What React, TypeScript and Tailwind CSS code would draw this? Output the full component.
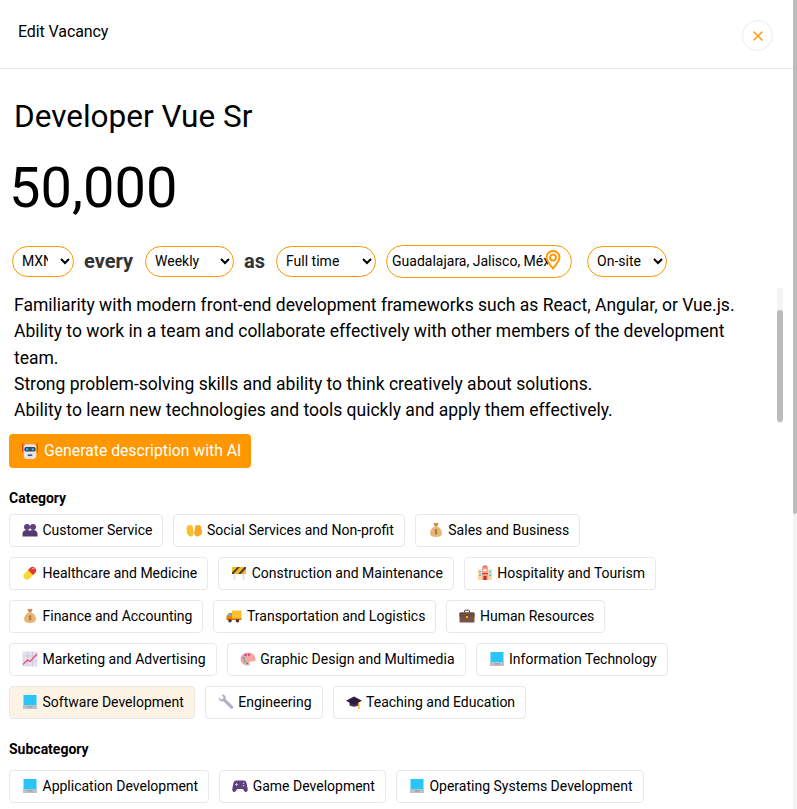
import type { ReactNode } from "react";
import { X } from "lucide-react";

const Svg = ({ children }: { children: ReactNode }) => (
  <svg viewBox="0 0 16 16" className="h-4 w-4 shrink-0">
    {children}
  </svg>
);

const People = () => (
  <Svg>
    <circle cx="5" cy="5" r="3" fill="#5e3f7f" />
    <circle cx="11" cy="5" r="3" fill="#5e3f7f" />
    <path d="M.5 14.500v-3C.5 9.500 2.500 8 5 8c1.300 0 2.300.3 3 .8.700-.5 1.700-.8 3-.8 2.500 0 4.500 1.500 4.500 3.500v3z" fill="#533a72" />
  </Svg>
);

const Hands = () => (
  <Svg>
    <path d="M.5 8C.5 5.500 1.300 3.500 2.400 3c.6-.3 1 .2 1.100.6.400-.8 1.300-.9 1.700-.2.700-.2 1.400.3 1.500 1.200l1 5.400c.3 2.500-1 4.500-3 4.500S.5 12 .5 8z" fill="#fbc02d" />
    <path d="M15.500 8c0-2.500-.8-4.500-1.900-5-.6-.3-1 .2-1.100.6-.4-.8-1.300-.9-1.700-.2-.7-.2-1.400.3-1.500 1.200l-1 5.400c-.3 2.500 1 4.500 3 4.500s5.200-2.500 5.200-6.500z" fill="#f9a825" />
  </Svg>
);

const Bag = () => (
  <Svg>
    <path d="M5.500 1h5L9.300 4.500H6.700z" fill="#c98f4f" />
    <path d="M6.500 4.500h3C12.500 6 14 8.500 14 11c0 2.500-2 4-6 4s-6-1.500-6-4c0-2.500 1.500-5 4.500-6.500z" fill="#e9b675" />
    <path d="M8 7v5.500M9.300 8.300C9 7.800 7 7.700 7 8.800c0 1.200 2.200.7 2.200 2 0 1-2 1-2.400.4" stroke="#8a5a2b" strokeWidth=".7" fill="none" />
  </Svg>
);

const Pill = () => (
  <Svg>
    <path d="M8.500 2.500 2 9a3.600 3.600 0 0 0 5 5l6.500-6.500z" fill="#fdd835" />
    <path d="M8.500 2.500a3.600 3.600 0 0 1 5 5L11 10 6 5z" fill="#e53935" />
    <path d="M10 3.700c.8-.5 1.900-.4 2.400.1" stroke="#ffcdd2" strokeWidth="1" fill="none" />
  </Svg>
);

const Barrier = () => (
  <Svg>
    <path d="M3.500 9v6M12.500 9v6" stroke="#e3e3e3" strokeWidth="1.800" />
    <rect x="1" y="2" width="14" height="7" fill="#f9b824" />
    <path d="M1 7.500 6.500 2H9L2.500 9H1zM7 9l6.500-7H15v1.500L10 9z" fill="#424242" />
  </Svg>
);

const Hotel = () => (
  <Svg>
    <rect x="1" y="4.500" width="14" height="10.500" fill="#fbd5a5" />
    <rect x="5" y="1.500" width="6" height="13.500" fill="#f4a58f" />
    <rect x="6" y=".5" width="4" height="2" fill="#e57373" />
    <rect x="2" y="6" width="2" height="1.500" fill="#4fc3f7" />
    <rect x="12" y="6" width="2" height="1.500" fill="#4fc3f7" />
    <rect x="2" y="9.500" width="2" height="1.500" fill="#4fc3f7" />
    <rect x="12" y="9.500" width="2" height="1.500" fill="#4fc3f7" />
    <rect x="6.500" y="4.500" width="3" height="1.500" fill="#fff" />
    <rect x="5" y="8" width="6" height="1.200" fill="#e53935" />
    <rect x="6.500" y="11" width="3" height="4" fill="#c62828" />
  </Svg>
);

const Truck = () => (
  <Svg>
    <rect x="6" y="2.500" width="9.500" height="8.500" rx=".6" fill="#fbc02d" />
    <path d="M.5 11V8L3 5h3v6z" fill="#f57c00" />
    <path d="M1.700 8l1.700-2H5v2z" fill="#4fc3f7" />
    <rect x=".5" y="10.500" width="15" height="1.500" fill="#ef6c00" />
    <circle cx="4" cy="12.700" r="1.800" fill="#4e342e" />
    <circle cx="11.500" cy="12.700" r="1.800" fill="#4e342e" />
  </Svg>
);

const Briefcase = () => (
  <Svg>
    <path d="M5.500 4.500V3c0-.5.300-.8.800-.8h3.400c.5 0 .8.300.8.800v1.500" stroke="#5d4037" strokeWidth="1" fill="none" />
    <rect x=".5" y="4.500" width="15" height="10" rx="1" fill="#795548" />
    <rect x=".5" y="4.500" width="15" height="4.500" rx="1" fill="#6d4c41" />
    <rect x="7" y="8" width="2" height="2" fill="#ffb300" />
  </Svg>
);

const Chart = () => (
  <Svg>
    <rect x=".5" y=".5" width="15" height="15" fill="#e6e0ee" />
    <path d="M.5 5h15M.5 10h15M5.500.5v15M10.500.5v15" stroke="#c5b9d6" strokeWidth=".6" />
    <path d="M1 13.500 5.500 9 8 10.500 15 3" stroke="#ec407a" strokeWidth="1.100" fill="none" />
  </Svg>
);

const Palette = () => (
  <Svg>
    <path d="M8 1.500C3.500 1.500.5 4.500.5 8c0 3.800 3.200 6.500 7.500 6.500 1.500 0 2-1 1.500-2-.5-1.100.2-2 1.500-2h2.500c1.500 0 2-1 2-2.500 0-3.500-3-6.500-7.500-6.500z" fill="#f5a6a0" />
    <circle cx="3.500" cy="7" r="1.200" fill="#42a5f5" />
    <circle cx="5.500" cy="4" r="1.200" fill="#ab47bc" />
    <circle cx="9" cy="3.700" r="1.200" fill="#ec407a" />
    <circle cx="4.500" cy="10" r="1.200" fill="#66bb6a" />
    <circle cx="7" cy="12.300" r="1" fill="#26a69a" />
  </Svg>
);

const Laptop = () => (
  <Svg>
    <rect x="1.500" y="1" width="13" height="10" fill="#29c5f6" />
    <path d="M1 11h14v4H1z" fill="#b8c2c8" />
    <rect x="5.500" y="12.500" width="5" height=".8" fill="#78909c" />
  </Svg>
);

const Wrench = () => (
  <Svg>
    <path d="M.8 3.500 3 5.500 5 5l.5-2-2.200-2.200C5.500 0 7.800 1.500 7.800 3.800c0 .4 0 .8-.2 1.200l7 7c.9.900.9 1.900.3 2.500-.6.600-1.600.6-2.500-.3l-7-7C3 8 .2 6 .8 3.500z" fill="#b4aec2" />
  </Svg>
);

const Cap = () => (
  <Svg>
    <path d="M3.500 8v3.500c2.500 1.500 6.500 1.500 9 0V8z" fill="#4a2f55" />
    <path d="M8 2.500 0 6.800 8 11l8-4.200z" fill="#2f1b3d" />
    <path d="M12.800 8.500V15" stroke="#f9a825" strokeWidth="1.300" />
  </Svg>
);

const Gamepad = () => (
  <Svg>
    <path d="M4.500 2.500h7c1.800 0 2.800 1 3.200 3l1 5.500c.3 2-1 3.500-2.400 3-1-.4-1.800-2.500-2.800-3H5.500c-1 .5-1.800 2.600-2.800 3-1.400.5-2.700-1-2.400-3l1-5.500c.4-2 1.400-3 3.200-3z" fill="#5e3f7f" />
    <path d="M4.500 5v3M3 6.500h3" stroke="#cfc3dd" strokeWidth=".9" />
    <circle cx="11.500" cy="5.300" r=".8" fill="#cfc3dd" />
    <circle cx="11.500" cy="7.700" r=".8" fill="#cfc3dd" />
  </Svg>
);

const Robot = () => (
  <svg viewBox="0 0 16 16" className="h-[18px] w-[18px] shrink-0">
    <path d="M1.500 1v8M14.500 1v8" stroke="#e53935" strokeWidth="1" />
    <rect x="2.500" y="2" width="11" height="13" rx="3" fill="#e8e4ee" />
    <rect x="3" y="4.500" width="10" height="4" rx="1.500" fill="#37474f" />
    <rect x="4.500" y="5.500" width="2" height="2" fill="#29b6f6" />
    <rect x="9.500" y="5.500" width="2" height="2" fill="#29b6f6" />
    <rect x="6" y="11" width="4" height="1.500" fill="#455a64" />
  </svg>
);

const Pin = () => (
  <svg viewBox="0 0 16 20" fill="none" stroke="#ff9800" strokeWidth="1.900" className="absolute top-[5px] left-[159px] h-5 w-4">
    <path d="M8 18.500C5 14.500 1.500 11 1.500 7.500a6.500 6.500 0 0 1 13 0C14.500 11 11 14.500 8 18.500z" />
    <circle cx="8" cy="7.500" r="3" />
  </svg>
);

type ChipData = { label: string; icon: ReactNode; active?: boolean };

const categories: ChipData[] = [
  { label: "Customer Service", icon: <People /> },
  { label: "Social Services and Non-profit", icon: <Hands /> },
  { label: "Sales and Business", icon: <Bag /> },
  { label: "Healthcare and Medicine", icon: <Pill /> },
  { label: "Construction and Maintenance", icon: <Barrier /> },
  { label: "Hospitality and Tourism", icon: <Hotel /> },
  { label: "Finance and Accounting", icon: <Bag /> },
  { label: "Transportation and Logistics", icon: <Truck /> },
  { label: "Human Resources", icon: <Briefcase /> },
  { label: "Marketing and Advertising", icon: <Chart /> },
  { label: "Graphic Design and Multimedia", icon: <Palette /> },
  { label: "Information Technology", icon: <Laptop /> },
  { label: "Software Development", icon: <Laptop />, active: true },
  { label: "Engineering", icon: <Wrench /> },
  { label: "Teaching and Education", icon: <Cap /> },
];

const subcategories: ChipData[] = [
  { label: "Application Development", icon: <Laptop /> },
  { label: "Game Development", icon: <Gamepad /> },
  { label: "Operating Systems Development", icon: <Laptop /> },
];

function Chip({ label, icon, active }: ChipData) {
  return (
    <button
      className={`flex h-[33px] items-center gap-[4.5px] rounded border border-[#e8e8ec] pr-[10px] pb-px pl-3 text-sm text-black ${
        active ? "bg-[#fdf3e5]" : "bg-white"
      }`}
    >
      {icon}
      {label}
    </button>
  );
}

function Pick({ width, options }: { width: string; options: string[] }) {
  return (
    <select
      className={`${width} h-[31px] rounded-full border border-[#ff9800] bg-white pr-[9px] pb-px pl-[5px] text-sm text-black`}
    >
      {options.map((o) => (
        <option key={o}>{o}</option>
      ))}
    </select>
  );
}

export default function App() {
  return (
    <div className="flex h-[809px] overflow-hidden bg-white font-['Roboto',sans-serif] text-black">
      <div className="w-[793px] shrink-0">
        {/* Header */}
        <div className="flex h-[69px] items-start justify-between border-b border-[#e6e6ec] pt-5 pr-5 pl-[18px]">
          <h2 className="mt-px text-base leading-[22px] tracking-[-0.1px]">Edit Vacancy</h2>
          <button className="flex h-[31px] w-[31px] items-center justify-center rounded-full border border-[#ececec] text-[#ff9800]">
            <X size={16} />
          </button>
        </div>

        <h1 className="mt-[30px] pl-[14px] text-[31.5px] leading-9">Developer Vue Sr</h1>
        <div className="mt-[23px] pl-[9px] text-[56px] leading-[60px]">50,000</div>

        <div className="mt-[28px] flex h-[31px] items-center pl-3">
          <Pick width="w-[62px]" options={["MXN"]} />
          <span className="ml-[10px] pb-0.5 text-xl font-bold text-[#333]">every</span>
          <span className="ml-3">
            <Pick width="w-[89px]" options={["Weekly"]} />
          </span>
          <span className="ml-[10px] pb-0.5 text-xl font-bold text-[#333]">as</span>
          <span className="ml-[11px]">
            <Pick width="w-[100px]" options={["Full time"]} />
          </span>
          <div className="relative ml-[10px]">
            <input
              readOnly
              value="Guadalajara, Jalisco, México"
              className="h-[33px] w-[186px] rounded-full border border-[#ff9800] pr-[23px] pb-px pl-[5px] text-sm text-black outline-none"
            />
            <Pin />
          </div>
          <span className="ml-[15px]">
            <Pick width="w-[80px]" options={["On-site"]} />
          </span>
        </div>

        {/* Description with its own scrollbar */}
        <div className="mt-[11px] flex h-[135px] items-start">
          <p className="w-[777px] shrink-0 pt-1 pr-5 pl-[14px] text-[17.5px] leading-[26.3px]">
            Familiarity with modern front-end development frameworks such as React, Angular, or Vue.js.
            <br />
            Ability to work in a team and collaborate effectively with other members of the development team.
            <br />
            Strong problem-solving skills and ability to think creatively about solutions.
            <br />
            Ability to learn new technologies and tools quickly and apply them effectively.
          </p>
          <div className="h-[135px] w-[6px] shrink-0 bg-[#f3f3f3] pt-[22px]">
            <div className="h-[112px] rounded-full bg-[#bcbcbc]" />
          </div>
        </div>

        <button className="mt-[11px] ml-[9px] flex h-[34px] w-[242px] items-center gap-[5px] rounded bg-[#ff9800] pl-3 text-[15.75px] text-white">
          <Robot />
          Generate description with AI
        </button>

        <h3 className="mt-5 pl-[9px] text-sm leading-5 font-bold">Category</h3>
        <div className="mt-[6px] flex w-[770px] flex-wrap gap-[10px] pl-[9px]">
          {categories.map((c) => (
            <Chip key={c.label} {...c} />
          ))}
        </div>

        <h3 className="mt-5 pl-[9px] text-sm leading-5 font-bold">Subcategory</h3>
        <div className="mt-[11px] flex w-[770px] flex-wrap gap-[10px] pl-[9px]">
          {subcategories.map((c) => (
            <Chip key={c.label} {...c} />
          ))}
        </div>
      </div>

      {/* Page scrollbar */}
      <div className="h-full w-1 shrink-0 bg-[#f3f3f3]">
        <div className="h-[514px] rounded-b-sm bg-[#bcbcbc]" />
      </div>
    </div>
  );
}
